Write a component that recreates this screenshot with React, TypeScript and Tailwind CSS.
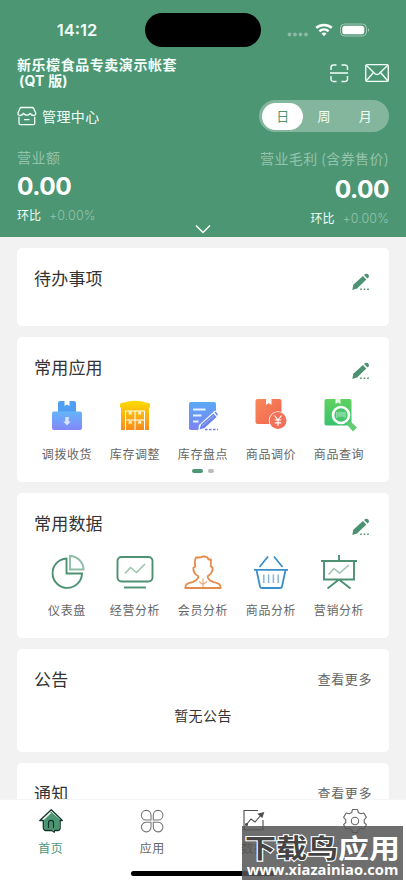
import React from 'react';

const GREEN = '#4c9272';

const SignalStatus = () => (
  <svg width="84" height="16" viewBox="0 0 84 16" fill="none">
    <g fill="#fff" fillOpacity="0.35">
      <circle cx="2.500" cy="12.500" r="1.900" />
      <circle cx="8" cy="12.500" r="1.900" />
      <circle cx="13.500" cy="12.500" r="1.900" />
      <circle cx="19" cy="12.500" r="1.900" />
    </g>
    <g stroke="#fff" strokeWidth="2.500">
      <path d="M29.200 5.800a12 12 0 0 1 15.600 0" />
      <path d="M32.300 9.200a7.400 7.400 0 0 1 9.400 0" />
    </g>
    <path d="M34.500 11.500a4 4 0 0 1 5 0L37 14.200z" fill="#fff" />
    <rect x="53.500" y="2" width="26" height="12" rx="4" stroke="#fff" strokeOpacity="0.45" />
    <rect x="55.300" y="3.800" width="22" height="8.500" rx="2.600" fill="#fff" />
    <path d="M81 6.200c1.300.6 1.300 3 0 3.600z" fill="#fff" fillOpacity="0.6" />
  </svg>
);

const ScanIcon = () => (
  <svg width="20" height="20" viewBox="0 0 20 20" fill="none" stroke="#f2fff9" strokeWidth="1.4">
    <path d="M2 7V4.500A2.500 2.500 0 0 1 4.500 2H7.500M12.500 2h3A2.500 2.500 0 0 1 18.500 4.500V7M18.500 13v2.500a2.500 2.500 0 0 1-3 3h-3M7.500 18.500h-3A2.500 2.500 0 0 1 2 15.500V13M1 10h18" />
  </svg>
);

const MailIcon = () => (
  <svg width="24" height="20" viewBox="0 0 24 20" fill="none" stroke="#f2fff9" strokeWidth="1.4">
    <rect x="0.700" y="1.600" width="22.600" height="16.800" rx="1.500" />
    <path d="M1.500 2.500l8.500 8.200q2 1.700 4 0l8.500-8.200M1.500 17.500l7-8M22.500 17.500l-7-8" />
  </svg>
);

const StoreIcon = () => (
  <svg width="20" height="20" viewBox="0 0 20 20" fill="none" stroke="#f2fff9" strokeWidth="1.3">
    <path d="M4.300 1.500h10.900q1 0 1.500 1l2 4.500c.3 1.700-.8 2.500-2.200 2.500q-1.700 0-3.300-2-1.500 1.700-3.300 1.700T6.500 7.500q-1.500 2-3.300 2C1.700 9.500.7 8.700 1 7l1.900-4.500q.4-1 1.400-1z" />
    <path d="M2 10.800v6.400q0 1.500 1.500 1.500h12.700q1.500 0 1.500-1.500v-6.400M7 13.600h5.600" />
  </svg>
);

const EditIcon = () => (
  <svg width="18" height="18" viewBox="0 0 18 18" fill={GREEN}>
    <path d="M.3 17l1-5.300L10.900 2.900l3.400 3.500-9.200 9.200z" />
    <path d="M12 2l1.300-1q1-.7 2.300 0l1 1q.9 1.300 0 2.500L15.500 5.500z" />
    <path d="M8.200 15.400h1.600V17H8.200zM11.700 15.400h1.600V17h-1.600zM15.200 15.400h1.600V17h-1.600z" />
  </svg>
);

const ReceiveIcon = () => (
  <svg width="36" height="36" viewBox="0 0 36 36">
    <defs>
      <linearGradient id="receive" x1="0" y1="0" x2="0" y2="1">
        <stop offset="0" stopColor="#64b5f9" />
        <stop offset="1" stopColor="#8487f8" />
      </linearGradient>
    </defs>
    <path d="M9 14V5q0-2 2-2h4.500v5l2.500-1.500L20.500 8V3H25q2 0 2 2v9z" fill="#509ff4" />
    <rect x="3" y="13.500" width="30" height="18.500" rx="2" fill="url(#receive)" />
    <path d="M16.300 19h3.400v4.500h2L18 27.500l-3.700-4h2z" fill="#d8e5ff" />
  </svg>
);

const WarehouseIcon = () => (
  <svg width="36" height="36" viewBox="0 0 36 36">
    <defs>
      <linearGradient id="house" gradientUnits="userSpaceOnUse" x1="0" y1="3" x2="0" y2="32">
        <stop offset="0" stopColor="#fcdb00" />
        <stop offset="1" stopColor="#f78a1e" />
      </linearGradient>
    </defs>
    <path d="M3 6.500q0-1 1-1.300l8-2q6-1 12 0l8 2q1 .3 1 1.300V9.500h-1V32h-4V12.500H8V32H4V9.500H3z" fill="url(#house)" />
    <path d="M9 13.500h8.500v8H9zM18.500 13.500H27v8h-8.500zM9 22.500h8.500V32H9zM18.500 22.500H27V32h-8.500z" fill="url(#house)" />
    <path d="M11.700 13.500h3V17l-1.500-1-1.500 1zM21.200 13.500h3V17l-1.500-1-1.500 1zM11.700 22.700h3v3.600l-1.500-1-1.500 1zM21.200 22.700h3v3.600l-1.500-1-1.500 1z" fill="#fff4cf" />
  </svg>
);

const StocktakeIcon = () => (
  <svg width="36" height="36" viewBox="0 0 36 36">
    <defs>
      <linearGradient id="stock" x1="0" y1="0" x2="0" y2="1">
        <stop offset="0" stopColor="#5ba9f4" />
        <stop offset="1" stopColor="#7b83f4" />
      </linearGradient>
    </defs>
    <rect x="4" y="4" width="27" height="28" rx="1.800" fill="url(#stock)" />
    <path d="M8 11.500h12.500M8 17.500h8.500M8 23.500h5.500" stroke="#e6f2ff" strokeWidth="2.200" />
    <path d="M13 34l1-7L30 12.500l4 3V34z" fill="#fff" />
    <path d="M14.500 31.500l1.500-5L28.500 15.500l3 3.500L19.500 30zM29.500 14.500l1-.8q1 0 2.500 3l-1 1z" fill="#6b85eb" />
    <path d="M17 28l12-10.500" stroke="#9eb2fb" strokeWidth="1" />
    <path d="M20 31.500h13" stroke="#747fe8" strokeWidth="1.300" strokeDasharray="2.500 1.500" />
  </svg>
);

const PriceIcon = () => (
  <svg width="36" height="36" viewBox="0 0 36 36">
    <defs>
      <linearGradient id="price" x1="0" y1="0" x2="1" y2="1">
        <stop offset="0" stopColor="#f88958" />
        <stop offset="1" stopColor="#f16351" />
      </linearGradient>
    </defs>
    <rect x="2.500" y="1" width="26" height="25" rx="2" fill="url(#price)" />
    <path d="M13 1h5.500v6l-2.700-2L13 7z" fill="#fff" />
    <circle cx="25" cy="22.500" r="9.300" fill="#fff" />
    <circle cx="25" cy="22.500" r="8.500" fill="#f27259" />
    <path d="M21.500 17.500L25 22l3.500-4.500M25 22v5.700M21.800 22h6.400M21.800 24.800h6.400" fill="none" stroke="#fff" strokeWidth="1.200" />
  </svg>
);

const QueryIcon = () => (
  <svg width="36" height="36" viewBox="0 0 36 36">
    <defs>
      <linearGradient id="query" x1="0" y1="0" x2="0" y2="1">
        <stop offset="0" stopColor="#5fd15f" />
        <stop offset="1" stopColor="#39c271" />
      </linearGradient>
    </defs>
    <rect x="3.500" y="1" width="27" height="26.500" rx="2" fill="url(#query)" />
    <path d="M14.500 1h5v5L17 4.500 14.500 6z" fill="#e9ffe9" />
    <path d="M25.500 26l3.500-3 7 6.500-4 4z" fill="#62cd70" />
    <circle cx="20" cy="17" r="8" fill="#46c56d" stroke="#fff" strokeWidth="2.600" />
    <path d="M15.800 13.800v6M18 13.800v5M20 13.800v5M22 13.800v5M24 13.800v6" stroke="#b8edc4" strokeWidth="1" />
  </svg>
);

const DashboardIcon = () => (
  <svg width="40" height="40" viewBox="0 0 40 40" fill="none" strokeWidth="1.900">
    <path d="M19.500 6.500A14.700 14.700 0 1 0 35 21.500H19.500z" stroke={GREEN} />
    <path d="M23 4v13.500h13.500A13.800 13.800 0 0 0 23 4z" stroke="#8fbda8" />
  </svg>
);

const BusinessIcon = () => (
  <svg width="40" height="40" viewBox="0 0 40 40" fill="none" strokeWidth="1.900">
    <rect x="2.500" y="5" width="35" height="24.500" rx="4" stroke={GREEN} />
    <path d="M9 35.500h22" stroke={GREEN} />
    <path d="M10 21.500l5.500-6 6 5L30 12" stroke="#9cc4b1" strokeWidth="1.600" />
  </svg>
);

const MemberIcon = () => (
  <svg width="40" height="40" viewBox="0 0 40 40" fill="none" stroke="#e48a4a" strokeWidth="1.800" strokeLinejoin="round">
    <path d="M13 5.500h4q4-2 7.500 0l1 2h2.500l-.3 6.500 2 2q0 5-5 8.300c0 3 1.500 4.200 5.300 5.500 6 1.400 7.700 2.500 7.700 6.200H2.300c0-3.700 1.700-4.800 7.700-6.200 3.800-1.300 5.300-2.500 5.300-5.500-3.500-1.800-5-5-5-8.300l2-1.500c-.5-2.500-1-6 .7-9z" />
    <path d="M20 26.500V35M16 29.500l4 3 4-3" strokeWidth="1.200" strokeOpacity="0.7" />
  </svg>
);

const BasketIcon = () => (
  <svg width="40" height="40" viewBox="0 0 40 40" fill="none" stroke="#398fcb" strokeWidth="1.800">
    <path d="M8.500 15l8.500-10.500M31.500 15L23 4.500M3 17.800h34M5.500 18l3.500 16.500q.300 1.500 2 1.500h18q1.700 0 2-1.500L34.500 18" />
    <path d="M12.800 22.500v8.500M17.600 22.500v8.500M22.400 22.500v8.500M27.200 22.500v8.500" stroke="#83b6dc" strokeWidth="1.500" />
  </svg>
);

const MarketingIcon = () => (
  <svg width="40" height="40" viewBox="0 0 40 40" fill="none" stroke={GREEN} strokeWidth="1.900">
    <path d="M20 3v5M2 9h36M5 9v18.500h30V9M20 27.500l-11.500 9M20 27.500l11.500 9" />
    <path d="M9.500 22.500l5.500-6 5.500 4.500 9.500-8" stroke="#9cc4b1" strokeWidth="1.600" />
  </svg>
);

const HomeIcon = () => (
  <svg width="26" height="26" viewBox="0 0 26 26" fill="none">
    <path d="M3.500 12.500L13 3.500l10 9h-1.500V20q0 2-2 2H8q-2 0-2-2v-7.500z" fill="#4c9674" />
    <path d="M4.500 12.300L12.500 4.700" stroke="#fff" strokeWidth="1.300" />
    <path d="M5.300 20.200q.5 2.300 2.500 2.300h6l2.500 1.700v-1.700h3.200q2.600 0 2.600-2.500v-7.500h2.200L13.300 1.700 1.800 12.500h3.500v7.500" stroke="#14362a" strokeWidth="1.300" strokeLinejoin="round" />
    <path d="M10.500 20v-5.500q0-2.200 2.500-2.200t2.500 2.200V20" stroke="#14362a" strokeWidth="1.200" />
  </svg>
);

const AppsIcon = () => (
  <svg width="26" height="26" viewBox="0 0 26 26" fill="none" stroke="#777" strokeWidth="1.100">
    <path d="M12 12H7a4.800 4.800 0 1 1 5-5zM14.300 12V7a4.800 4.800 0 1 1 4.800 5zM12 14.300v4.500a4.800 4.800 0 1 1-5-4.500zM14.300 14.300h4.700a4.800 4.800 0 1 1-4.700 4.700z" />
  </svg>
);

const ChartIcon = () => (
  <svg width="26" height="26" viewBox="0 0 26 26" fill="none" stroke="#4b4b4b" strokeWidth="1.100">
    <path d="M17 2.500H3v19.300h19V12M5.500 16.500L10 11l4 3 6-7" />
    <path d="M22.500 4.700l-5 1.300 3.500 3z" fill="#4b4b4b" />
    <circle cx="5.500" cy="16.500" r="1" fill="#4b4b4b" />
  </svg>
);

const GearIcon = () => (
  <svg width="26" height="26" viewBox="0 0 26 26" fill="none" stroke="#696969" strokeWidth="1.100" strokeLinejoin="round">
    <path d="M10.500 1.500h5l.8 3 2.500 1.300 3-.8 2.600 4.400-2.200 2.200v2.900l2.200 2.200-2.600 4.400-3-.8-2.500 1.400-.8 2.900h-5l-.8-2.900-2.500-1.400-3 .8-2.600-4.400 2.200-2.200v-2.900L1.600 9.400 4.200 5l3 .8 2.500-1.300z" />
    <circle cx="13" cy="13" r="3.700" />
  </svg>
);

const periods = ['日', '周', '月'];

const apps = [
  { label: '调拨收货', icon: <ReceiveIcon /> },
  { label: '库存调整', icon: <WarehouseIcon /> },
  { label: '库存盘点', icon: <StocktakeIcon /> },
  { label: '商品调价', icon: <PriceIcon /> },
  { label: '商品查询', icon: <QueryIcon /> },
];

const reports = [
  { label: '仪表盘', icon: <DashboardIcon /> },
  { label: '经营分析', icon: <BusinessIcon /> },
  { label: '会员分析', icon: <MemberIcon /> },
  { label: '商品分析', icon: <BasketIcon /> },
  { label: '营销分析', icon: <MarketingIcon /> },
];

const tabs = [
  { label: '首页', icon: <HomeIcon />, active: true },
  { label: '应用', icon: <AppsIcon />, active: false },
  { label: '数据', icon: <ChartIcon />, active: false },
  { label: '设置', icon: <GearIcon />, active: false },
];

interface CardProps {
  title: string;
  className: string;
  action?: React.ReactNode;
  children?: React.ReactNode;
}

const Card: React.FC<CardProps> = ({ title, className, action, children }) => (
  <section className={`shrink-0 rounded-[5px] bg-white ${className}`}>
    <div className="flex h-[62px] items-center justify-between px-[17px] pb-[2px]">
      <h2 className="text-[17px] leading-6 tracking-[0.2px] text-[#333]">{title}</h2>
      {action}
    </div>
    {children}
  </section>
);

const EditButton = () => (
  <button className="mr-[2px] mt-[7px]">
    <EditIcon />
  </button>
);

const MoreLink = () => <a className="text-[13px] leading-5 tracking-[0.6px] text-[#666]">查看更多</a>;

interface IconRowProps {
  items: { label: string; icon: React.ReactNode }[];
}

const IconRow: React.FC<IconRowProps> = ({ items }) => (
  <div className="grid grid-cols-5 px-4">
    {items.map(item => (
      <div key={item.label} className="flex flex-col items-center">
        <div className="flex h-10 items-center">{item.icon}</div>
        <span className="mt-[9px] whitespace-nowrap text-[12px] leading-[18px] tracking-[0.6px] text-[#666]">
          {item.label}
        </span>
      </div>
    ))}
  </div>
);

const App: React.FC = () => {
  return (
    <div className="relative flex h-[883px] w-[406px] flex-col overflow-hidden bg-[#f2f2f2] font-['Noto_Sans_CJK_SC',sans-serif]">
      <header className="h-[237px] shrink-0 bg-[#4c9674] text-[#f2fff9]">
        <div className="flex h-[47px] items-start pt-[13px]">
          <div className="w-[145px] pl-[9px] text-center font-[Inter,sans-serif] text-[16.5px] font-semibold leading-[35px]">14:12</div>
          <div className="h-[34px] w-[116px] rounded-full bg-black" />
          <div className="ml-[26px] mt-[9px]">
            <SignalStatus />
          </div>
        </div>

        <div className="flex h-[44px] justify-between px-[17px] pt-[9px]">
          <h1 className="text-[14px] font-bold leading-[16px] tracking-[0.55px]">
            新乐檬食品专卖演示帐套
            <br />
            <span className="ml-[2px] font-[Inter,'Noto_Sans_CJK_SC',sans-serif] tracking-[0.2px]">(QT 版)</span>
          </h1>
          <div className="mt-[7px] flex gap-[16px]">
            <ScanIcon />
            <MailIcon />
          </div>
        </div>

        <div className="flex h-[50px] items-center justify-between px-[17px]">
          <div className="flex items-center gap-[5px]">
            <StoreIcon />
            <span className="text-[14px] leading-5 tracking-[0.4px]">管理中心</span>
          </div>
          <div className="flex h-8 w-[130px] items-center rounded-full bg-[#83b69d] px-[3px]">
            {periods.map(p => (
              <span
                key={p}
                className={`flex h-[27px] flex-1 items-center justify-center rounded-full text-[13px] ${
                  p === '日' ? 'bg-white text-[#4c9674]' : 'text-[#f2fff9]'
                }`}
              >
                {p}
              </span>
            ))}
          </div>
        </div>

        <div className="flex justify-between px-[17px]">
          <div className="pt-[6px]">
            <p className="text-[14px] leading-5 tracking-[0.5px] text-[#94c3ab]">营业额</p>
            <p className="mt-[1px] font-[Inter,sans-serif] text-[24.5px] font-bold leading-[36px] tracking-[-0.5px] text-white">0.00</p>
            <p className="mt-[1px] text-[12px] leading-5">
              环比<span className="ml-2 font-[Inter,sans-serif] text-[12.5px] font-light tracking-[0.1px] text-[#94c3ab]">+0.00%</span>
            </p>
          </div>
          <div className="pt-[7px] text-right">
            <p className="text-[14px] leading-5 tracking-[0.4px] text-[#94c3ab]">营业毛利 (含券售价)</p>
            <p className="mt-[3px] font-[Inter,sans-serif] text-[24.5px] font-bold leading-[36px] tracking-[-0.5px] text-white">0.00</p>
            <p className="mt-[1px] text-[12px] leading-5">
              环比<span className="ml-2 font-[Inter,sans-serif] text-[12.5px] font-light tracking-[0.1px] text-[#94c3ab]">+0.00%</span>
            </p>
          </div>
        </div>
        <svg className="mx-auto -mt-[5px]" width="16" height="10" viewBox="0 0 16 10" fill="none" stroke="#fff" strokeWidth="1.4">
          <path d="M1 1.500l7 7 7-7" />
        </svg>
      </header>

      <main className="flex min-h-0 flex-1 flex-col gap-[11px] overflow-hidden px-[17px] pt-[11px]">
        <Card title="待办事项" className="h-[78px]" action={<EditButton />} />

        <Card title="常用应用" className="h-[145px]" action={<EditButton />}>
          <div className="-mt-[3px]">
            <IconRow items={apps} />
          </div>
          <div className="mt-[6px] flex justify-center gap-[5px] pr-[1px]">
            <span className="h-[4px] w-[11px] rounded-full bg-[#4c9674]" />
            <span className="h-[4px] w-[6px] rounded-full bg-[#bbb]" />
          </div>
        </Card>

        <Card title="常用数据" className="h-[145px]" action={<EditButton />}>
          <div className="-mt-[3px]">
            <IconRow items={reports} />
          </div>
        </Card>

        <Card title="公告" className="h-[103px]" action={<MoreLink />}>
          <p className="-mt-[6px] text-center text-[14px] leading-5 tracking-[0.4px] text-[#333]">暂无公告</p>
        </Card>

        <Card title="通知" className="h-[103px]" action={<MoreLink />} />
      </main>

      <nav className="h-[84px] shrink-0 border-t border-[#f5f5f5] bg-white">
        <div className="grid h-[71px] grid-cols-4 pt-[8px]">
          {tabs.map(tab => (
            <div key={tab.label} className="flex flex-col items-center">
              {tab.icon}
              <span
                className={`mt-[5px] text-[12px] leading-[18px] tracking-[0.6px] ${
                  tab.active ? 'text-[#4c9674]' : 'text-[#666]'
                }`}
              >
                {tab.label}
              </span>
            </div>
          ))}
        </div>
        <div className="mx-auto h-[5px] w-[144px] rounded-full bg-black" />
      </nav>

      <div className="absolute bottom-[3px] right-[3px] flex h-[54px] w-[161px] flex-col items-center overflow-hidden bg-[#555]/85">
        <p className="mt-[4px] origin-center scale-y-[0.84] whitespace-nowrap text-[31px] font-bold leading-[34px] text-white">
          <span className="text-[#444] [-webkit-text-stroke:2.5px_#fff] [paint-order:stroke_fill]">下载鸟</span>
          应用
        </p>
        <p className="-mt-[3px] font-['Open_Sans',sans-serif] text-[14.7px] font-bold leading-[16px] text-white">
          www.xiazainiao.com
        </p>
      </div>
    </div>
  );
};

export default App;
